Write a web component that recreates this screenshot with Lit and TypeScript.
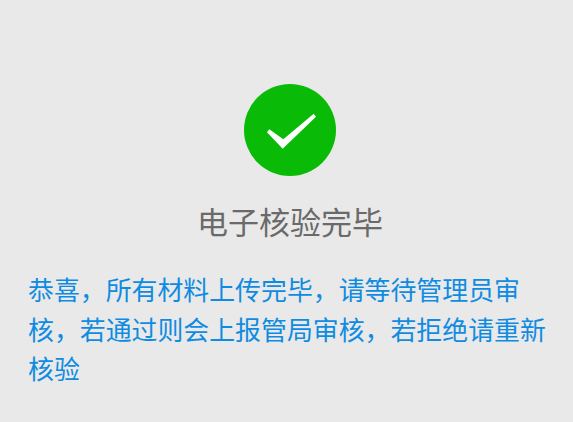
import { LitElement, html, css } from "lit";
import { customElement } from "lit/decorators.js";

@customElement("app-root")
export class AppRoot extends LitElement {
  static styles = css`
    :host {
      display: block;
      width: 573px;
      height: 422px;
      background: #e9e9e9;
      overflow: hidden;
      font-family: "Noto Sans CJK SC", "Noto Sans", sans-serif;
    }
    .head {
      display: flex;
      flex-direction: column;
      align-items: center;
      padding: 84px 0 0 7px;
    }
    .icon { display: block; width: 92px; height: 92px; }
    .title {
      margin-top: 21px;
      font-size: 31px;
      line-height: 48px;
      color: #6a6a6a;
    }
    .msg {
      margin: 24px 0 0;
      padding: 0 20px 0 28px;
      font-size: 25.9px;
      line-height: 39.6px;
      color: #0f8ce2;
    }
  `;
  render() {
    return html`
      <div class="head">
        <svg class="icon" viewBox="0 0 92 92">
          <circle cx="46" cy="46" r="46" fill="#09bb07"></circle>
          <polygon points="25.3,45.3 23,48.3 38.7,64.7 72,32.7 69.7,29.7 39.3,55.3" fill="#fff"></polygon>
        </svg>
        <div class="title">电子核验完毕</div>
      </div>
      <p class="msg">恭喜，所有材料上传完毕，请等待管理员审核，若通过则会上报管局审核，若拒绝请重新核验</p>
    `;
  }
}
